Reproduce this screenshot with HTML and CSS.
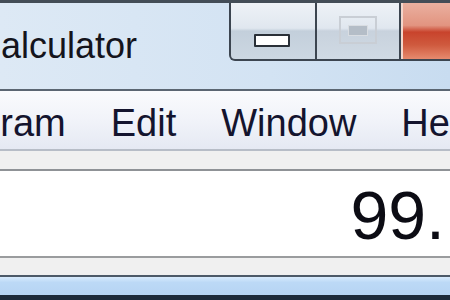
FILE: index.html
```html
<!DOCTYPE html>
<html lang="en">
<head>
    <meta charset="UTF-8">
    <title>Calculator</title>
    <link rel="stylesheet" href="styles.css">
</head>
<body>
    <div class="window">
        <!-- Title bar -->
        <div class="titlebar">
            <div class="title">Calculator</div>
            <div class="caption">
                <div class="cap-btn minimize"><span class="min-glyph"></span></div>
                <div class="cap-btn maximize"><span class="max-glyph"><span></span></span></div>
                <div class="cap-btn close"></div>
            </div>
        </div>

        <!-- Menu -->
        <div class="menubar">
            <span class="menu-item first">Program</span>
            <span class="menu-item">Edit</span>
            <span class="menu-item">Window</span>
            <span class="menu-item">Help</span>
        </div>

        <div class="band"></div>

        <!-- Display -->
        <div class="display">
            <span class="value">99.</span>
        </div>

        <div class="band lower"></div>

        <div class="statusbar"></div>
    </div>
</body>
</html>
```

FILE: styles.css
```css
body {
    margin: 0;
    padding: 0;
    width: 450px;
    height: 300px;
    overflow: hidden;
    font-family: 'Segoe UI', 'Liberation Sans', Arial, sans-serif;
    background: #f0f0f0;
}
.window {
    width: 450px;
    overflow: hidden;
}
.titlebar {
    display: flex;
    height: 86px;
    border-top: 3px solid #434d57;
    border-bottom: 2px solid #5b6672;
    background: linear-gradient(to right, #dde9f5, #d3e3f3 60%, #c8dcf0);
}
.title {
    flex: none;
    width: 254px;
    font-size: 36px;
    color: #14141c;
    margin-left: -25px;
    padding-top: 22px;
    white-space: nowrap;
}
.caption {
    flex: none;
    display: flex;
    height: 58px;
}
.cap-btn {
    flex: none;
    height: 56px;
    border-right: 2px solid #3c4550;
    border-bottom: 2px solid #3c4550;
    display: flex;
    align-items: center;
    justify-content: center;
}
.minimize {
    width: 84px;
    border-left: 2px solid #3c4550;
    border-bottom-left-radius: 6px;
    background: linear-gradient(to bottom, #eef2f7, #e0e7ef 45%, #c3cfdb 50%, #ccd7e2);
}
.maximize {
    width: 82px;
    background: linear-gradient(to bottom, #eef2f7, #e0e7ef 45%, #c8d2dd 50%, #d0dae4);
}
.close {
    width: 90px;
    border-right: none;
    background: linear-gradient(to bottom, #eab0a0, #e29480 40%, #c8432c 52%, #cf5a3e 75%, #e68a6e);
    box-shadow: inset 2px 0 0 #f3d6cc;
}
.min-glyph {
    width: 32px;
    height: 9px;
    margin-top: 18px;
    margin-left: -2px;
    background: #ffffff;
    border: 2px solid #2a3038;
    border-radius: 1px;
}
.max-glyph {
    width: 34px;
    height: 24px;
    margin-top: -2px;
    border: 2px solid #c9ced5;
    display: flex;
    align-items: center;
    justify-content: center;
}
.max-glyph span {
    width: 18px;
    height: 9px;
    background: #b4bdc7;
    border: 1px solid #d9dde2;
}
.menubar {
    display: flex;
    gap: 45px;
    height: 58px;
    border-bottom: 2px solid #b7bdc7;
    background: linear-gradient(to bottom, #fafbfd, #f1f3f9 50%, #e5e9f3);
    white-space: nowrap;
}
.menu-item {
    font-size: 38px;
    color: #14142e;
    padding-top: 11px;
}
.menu-item.first {
    margin-left: -80px;
}
.band {
    height: 18px;
    background: #f0f0f0;
}
.band.lower {
    height: 17px;
}
.display {
    height: 85px;
    border-top: 2px solid #8f9296;
    border-bottom: 2px solid #9a9c9e;
    background: #ffffff;
    display: flex;
    justify-content: flex-end;
}
.value {
    font-size: 68px;
    color: #0c0c14;
    padding-top: 5px;
    padding-right: 5px;
    line-height: 1.15;
}
.statusbar {
    height: 18px;
    border-top: 2px solid #4d5a68;
    border-bottom: 5px solid #1d2b3a;
    background: linear-gradient(to bottom, #d8ebfd, #bcd9f6 30%, #b6d4f3);
}
```
